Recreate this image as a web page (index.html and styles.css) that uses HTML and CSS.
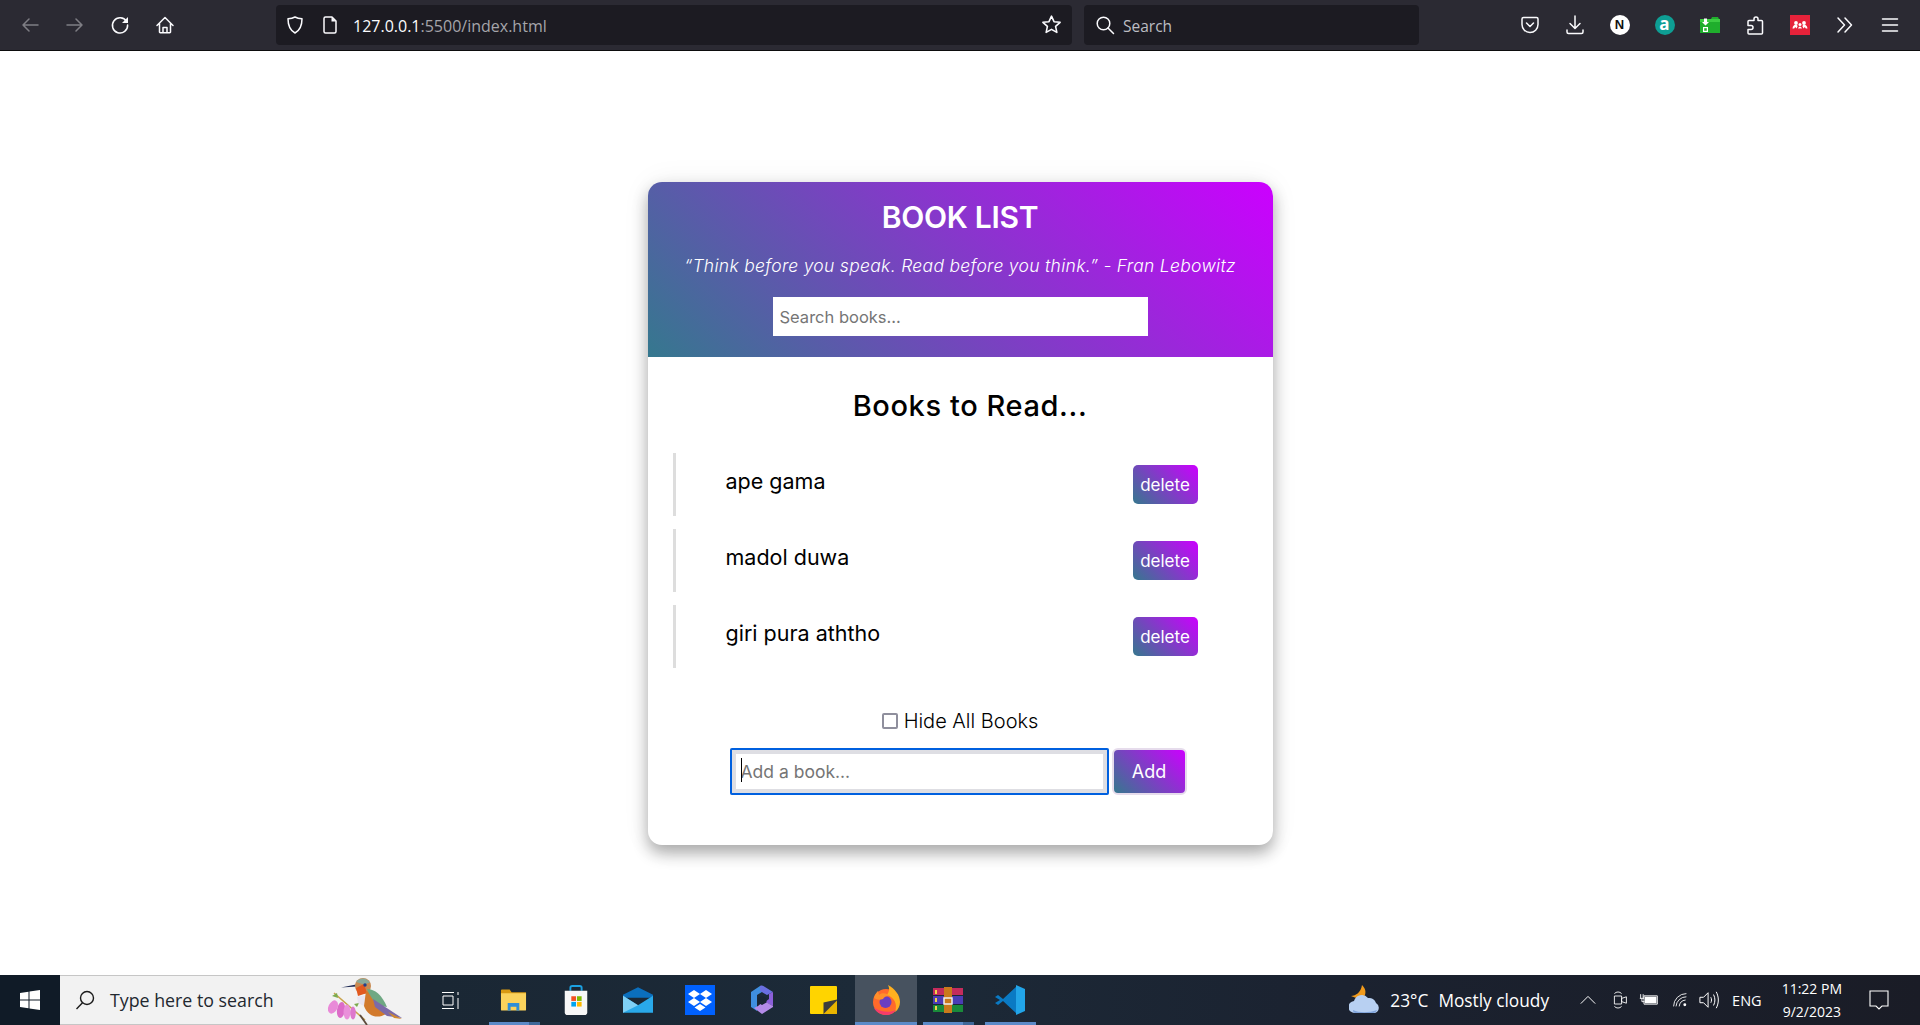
FILE: index.html
```html
<!DOCTYPE html>
<html lang="en">
<head>
<meta charset="utf-8">
<title>Book List</title>
<link rel="stylesheet" href="styles.css">
</head>
<body>
<header class="toolbar">
  <nav class="nav-group">
    <span class="slot dim"><svg viewBox="0 0 20 20" class="ico"><path d="M18 10H3M9 4l-6 6 6 6"/></svg></span>
    <span class="slot dim"><svg viewBox="0 0 20 20" class="ico"><path d="M2 10h15M11 4l6 6-6 6"/></svg></span>
    <span class="slot"><svg viewBox="0 0 20 20" class="ico"><path d="M16.500 6.500A7.600 7.600 0 1 0 17.600 10"/><path class="fill" d="M18 2v6h-6z"/></svg></span>
    <span class="slot"><svg viewBox="0 0 20 20" class="ico"><path d="M2 10.500 10 2.500l8 8M4.500 8.500V17a.8.8 0 0 0 .8.8h9.400a.8.8 0 0 0 .8-.8V8.500M8 17.800V12.500h4v5.300"/></svg></span>
  </nav>
  <div class="urlbar">
    <svg viewBox="0 0 20 20" class="ico shield"><path d="M10 2c2 1.200 4 1.700 7 1.800 0 6.700-1.800 11.500-7 14.200C4.800 15.300 3 10.500 3 3.800 6 3.700 8 3.200 10 2z"/></svg>
    <svg viewBox="0 0 20 20" class="ico doc"><path d="M4 3.500A1.500 1.500 0 0 1 5.500 2H12l4 4v10.500a1.500 1.500 0 0 1-1.500 1.500h-9A1.500 1.500 0 0 1 4 16.500z"/><path class="fill" d="M11.500 2 16 6.500h-4.500z"/></svg>
    <span class="url"><b>127.0.0.1</b>:5500/index.html</span>
    <svg viewBox="0 0 20 20" class="ico star"><path d="m10 2 2.400 5.300 5.800.6-4.300 3.900 1.200 5.700L10 14.600l-5.100 2.900 1.200-5.700L1.800 7.900l5.800-.6z"/></svg>
  </div>
  <div class="searchbar">
    <svg viewBox="0 0 20 20" class="ico"><circle cx="8.500" cy="8.500" r="6.300"/><path d="m13 13 5.500 5.500"/></svg>
    <span class="search-word">Search</span>
  </div>
  <div class="tools">
    <span class="slot"><svg viewBox="0 0 20 20" class="ico"><path d="M3.500 2.500h13A1.500 1.500 0 0 1 18 4v5.500a8 8 0 0 1-16 0V4a1.500 1.500 0 0 1 1.500-1.500z"/><path d="m6.500 8 3.500 3.500L13.500 8"/></svg></span>
    <span class="slot"><svg viewBox="0 0 20 20" class="ico"><path d="M10 1v12M5 8.500l5 5 5-5M2 15v2a1.500 1.500 0 0 0 1.500 1.500h13A1.500 1.500 0 0 0 18 17v-2"/></svg></span>
    <span class="slot"><span class="ext-n">N</span></span>
    <span class="slot"><span class="ext-a">a</span></span>
    <span class="slot"><svg viewBox="0 0 20 20" class="flat"><path fill="#1fae2c" d="M0 4h11l1-2h6l1 2h1v14H0z"/><path fill="#3ccb42" d="M0 4h20v3H0z"/><path fill="#fff" d="M4 3.500h3V7h2l-3.500 3.500L2 7h2zM3 12h5v5H3z"/><path fill="#2cb535" d="M4.200 13.200h2.600v2.600H4.200z"/></svg></span>
    <span class="slot"><svg viewBox="0 0 20 20" class="ico"><path d="M11 2a2 2 0 0 1 2 2v1.500h3.500a1 1 0 0 1 1 1V18a1 1 0 0 1-1 1H4a1 1 0 0 1-1-1v-3.500h3a2 2 0 0 0 0-4H3V6.500a1 1 0 0 1 1-1h5V4a2 2 0 0 1 2-2z"/></svg></span>
    <span class="slot"><svg viewBox="0 0 20 20" class="flat"><path fill="#e6223a" d="M0 0h20v20H0z"/><circle cx="6" cy="8" r="1.900" fill="#fff"/><circle cx="14" cy="8" r="1.900" fill="#fff"/><circle cx="10" cy="9.500" r="1.500" fill="#fff"/><path fill="#fff" d="M2.500 13.500c.3-2.500 1.500-3.700 3-3.700 1 0 1.700.5 2.200 1.300l-1.200 2.400-1.300-1.500-1 1.500zM17.500 13.500c-.3-2.500-1.500-3.700-3-3.700-1 0-1.700.5-2.200 1.300l1.200 2.400 1.300-1.500 1 1.500zM8 14c.2-1.600 1-2.600 2-2.600s1.800 1 2 2.600l-1.100-.9-.9.9-.9-.9z"/></svg></span>
    <span class="slot"><svg viewBox="0 0 20 20" class="ico"><path d="m3 3 6.500 7L3 17M10 3l6.500 7-6.500 7"/></svg></span>
    <span class="slot"><svg viewBox="0 0 20 20" class="ico"><path d="M2.500 4h15M2.500 10h15M2.500 16h15"/></svg></span>
  </div>
</header>

<main class="page">
  <section class="card">
    <div class="card-head">
      <h1 class="title">BOOK LIST</h1>
      <p class="quote">“Think before you speak. Read before you think.” - Fran Lebowitz</p>
      <input class="search-input" type="text" placeholder="Search books...">
    </div>
    <div class="card-body">
      <h2 class="subtitle">Books to Read...</h2>
      <ul class="book-list">
        <li class="book"><span class="book-name">ape gama</span><button class="delete" type="button">delete</button></li>
        <li class="book"><span class="book-name">madol duwa</span><button class="delete" type="button">delete</button></li>
        <li class="book"><span class="book-name">giri pura aththo</span><button class="delete" type="button">delete</button></li>
      </ul>
      <label class="hide-row"><input class="hide-check" type="checkbox"><span>Hide All Books</span></label>
      <form class="add-row">
        <span class="add-wrap"><input class="add-input" type="text" placeholder="Add a book..."><i class="caret"></i></span>
        <button class="add-btn" type="button">Add</button>
      </form>
    </div>
  </section>
</main>

<footer class="taskbar">
  <span class="start"><svg viewBox="0 0 20 20" class="flat"><path fill="#fff" d="M0 3l8.500-1.300V9.500H0zM9.500 1.500 20 0v9.500H9.500zM0 10.500h8.500v7.800L0 17zM9.500 10.500H20V20L9.500 18.500z"/></svg></span>
  <div class="task-search">
    <svg viewBox="0 0 20 20" class="mag"><circle cx="12" cy="8" r="6.500"/><path d="M7.500 12.700 1.500 19"/></svg>
    <span class="task-search-text">Type here to search</span>
    <svg viewBox="0 0 90 50" class="bird">
      <path d="M14 18 45 45" stroke="#c9a24a" stroke-width="1.500" fill="none"/>
      <path d="M40 40 47 50" stroke="#5c4a3c" stroke-width="1.800" fill="none"/>
      <ellipse cx="13" cy="32" rx="4.500" ry="7" fill="#e98ad8" transform="rotate(25 13 32)"/>
      <ellipse cx="21" cy="35" rx="4" ry="8" fill="#dc6cc8" transform="rotate(8 21 35)"/>
      <ellipse cx="27" cy="37" rx="3.500" ry="7.500" fill="#ea90da"/>
      <ellipse cx="33" cy="38" rx="2.800" ry="6.500" fill="#de78cc"/>
      <path fill="#7cab4e" d="M12 21l5-3 1 5zM34 29l5-1-2 4z"/>
      <path fill="#1f2b55" d="M21 12.500 36 9.500l1 2z"/>
      <circle cx="43" cy="11" r="8" fill="#c98a52"/>
      <path fill="#8aa998" d="M36 7a8.500 8.500 0 0 1 14 .5l-6 2z"/>
      <path fill="#e2591f" d="M36 13l8-4 3 9-9 3z"/>
      <circle cx="45" cy="10" r="1.700" fill="#24408a"/>
      <path fill="#e8e4f0" d="M37 22l9-2 2 8-4 3-6-3z"/>
      <path fill="#d27a2c" d="M46 16c8 2 14 10 20 23-8 5-18 3-22-8z"/>
      <path fill="#6fa883" d="M47 14c8 0 15 6 20 18l-7-1c-5-3-10-9-13-17z"/>
      <path fill="#7d6aa8" d="M53 24l29 19-15-2-12-9z"/>
      <path fill="#d08a2f" d="M68 37l14 7-8-1z"/>
    </svg>
  </div>
  <span class="task-slot task-view"><svg viewBox="0 0 20 20" class="thin"><path d="M1 2.500h12M1 18.500h12M2 6h10v9H2zM17 2v3M17 8v11"/></svg></span>
  <span class="task-slot run split"><svg viewBox="0 0 28 24" class="app app-folder"><path fill="#d99a12" d="M1 2a1 1 0 0 1 1-1h8l2 3h15v5H1z"/><path fill="#fbd35c" d="M1 5h26v17a1 1 0 0 1-1 1H2a1 1 0 0 1-1-1z"/><path fill="#2f8fd8" d="M8 15h12v8h-3v-4h-6v4H8z"/></svg></span>
  <span class="task-slot"><svg viewBox="0 0 28 32" class="app"><path d="M8 6V3a2 2 0 0 1 2-2h8a2 2 0 0 1 2 2v3" fill="none" stroke="#1ba1e2" stroke-width="2"/><path fill="#f7f7f7" d="M2 6h24v23a3 3 0 0 1-3 3H5a3 3 0 0 1-3-3z"/><path fill="#f25022" d="M9 12h5v5H9z"/><path fill="#7fba00" d="M15 12h5v5h-5z"/><path fill="#00a4ef" d="M9 18h5v5H9z"/><path fill="#ffb900" d="M15 18h5v5h-5z"/></svg></span>
  <span class="task-slot"><svg viewBox="0 0 28 24" class="app"><path fill="#0b6fbd" d="M0 7 14 0l14 7v3H0z"/><path fill="#29a9ea" d="M0 8l14 9 14-9v16H0z"/><path fill="#7fd0f5" d="M0 8l14 9L0 24z"/></svg></span>
  <span class="task-slot"><svg viewBox="0 0 30 30" class="app"><path fill="#0061ff" d="M0 0h30v30H0z"/><path fill="#fff" d="m9 5 6 4-6 4-6-4zM21 5l6 4-6 4-6-4zM9 13l6 4-6 4-6-4zM21 13l6 4-6 4-6-4zM15 19l5.500 3.500L15 26l-5.500-3.500z"/></svg></span>
  <span class="task-slot"><svg viewBox="0 0 26 30" class="app"><path fill="#3f8fe0" d="M11 1 2 7v15l6 4V10l8-5z"/><path fill="#6a6fe0" d="M11 1c2-1 3 0 5 1l8 5-6 3-7-4z"/><path fill="#8b5fd9" d="M24 7v14l-8-4 4-3V9z"/><path fill="#b48be8" d="M5 23l8 6 11-7v-1l-9-5-6 5z"/><path fill="#1a2634" d="M13 11l4.500 2.500v4L13 20l-4.500-2.500v-4z"/></svg></span>
  <span class="task-slot"><svg viewBox="0 0 26 27" class="app app-note"><path fill="#ffd400" d="M0 1a1 1 0 0 1 1-1h24a1 1 0 0 1 1 1v25a1 1 0 0 1-1 1H1a1 1 0 0 1-1-1z"/><path fill="#3c3c3c" d="M13 27V16l13-3v4L16 27z"/><path fill="#e8b400" d="M13 27 26 14v12a1 1 0 0 1-1 1z"/></svg></span>
  <span class="task-slot active run"><svg viewBox="0 0 28 30" class="app"><circle cx="14" cy="17" r="13" fill="#ff6a2b"/><path fill="#ffb01f" d="M16 0c7 4 12 10 12 17 0 4-2 8-5 10 3-8-1-15-8-17 2-3 3-6 1-10z"/><path fill="#f53c6b" d="M2 23c2 4 7 7 12 7 4 0 8-2 10-5-6 3-15 2-22-2z"/><circle cx="13.500" cy="17" r="6" fill="#6a3ec0"/><path fill="#ff8f2a" d="M2 13c1-4 3-6 4-7l1 4c2-2 5-2 8-1l2 2c-3 0-5 1-6 3-3 1-6 1-9-1z"/></svg></span>
  <span class="task-slot run split"><svg viewBox="0 0 30 26" class="app"><path fill="#c42c5c" d="M0 1h30v7H0z"/><path fill="#4b3cb5" d="M0 9h30v8H0z"/><path fill="#1a8a3a" d="M0 18h30v7H0z"/><path fill="#c9791c" d="M11 0h8v26h-8z"/><path fill="#f1d44b" d="M2 3h2v4H2zM2 11h2v4H2zM2 19h2v4H2z"/><path fill="none" stroke="#eee" stroke-width="1.500" d="M11 11h8v6h-8z"/></svg></span>
  <span class="task-slot run"><svg viewBox="0 0 30 30" class="app"><path fill="#0a7ac4" d="M22 1 8 14 3 10 0 12l5 3-5 3 3 2 5-4 14 13z"/><path fill="#22a5e8" d="M21 0l9 4v22l-9 4z"/><path fill="#0a7ac4" d="M21 8l-9 7 9 7z"/></svg></span>
  <div class="tray">
    <svg viewBox="0 0 32 30" class="weather"><path fill="#f09a1c" d="M13 0c3 3 5 7 2 12-4 2-9 1-13-1 5 0 10-4 11-11z"/><path fill="#b8d0f2" d="M6 28a6 6 0 0 1-1-12 8 8 0 0 1 14-3 7 7 0 0 1 8 5 5.500 5.500 0 0 1-1 10z"/><path fill="#7fa3da" d="M4 25c6 3 16 3 24 0-1 2-2 3-4 3H6c-1 0-2-1-2-3z"/></svg>
    <span class="temp">23°C</span>
    <span class="cond">Mostly cloudy</span>
    <svg viewBox="0 0 20 20" class="tray-ico chev"><path d="m2 14 8-8 8 8"/></svg>
    <svg viewBox="0 0 20 24" class="tray-ico meet"><path d="M3 7h9v10H3zM12 10l6-2v8l-6-2zM3 4a6 6 0 0 1 9 0M3 20a6 6 0 0 0 9 0"/></svg>
    <svg viewBox="0 0 24 20" class="tray-ico batt"><path d="M6 5h16v10H6z"/><path class="solid" d="M7 6h14v8H7z"/><path d="M2 3v5M5 3v5M1 8h5M3.500 8v4h3"/></svg>
    <svg viewBox="0 0 20 20" class="tray-ico wifi"><path d="M2 18A16 16 0 0 1 18 2M5 18A13 13 0 0 1 18 6M9 18a9 9 0 0 1 8-8"/><circle class="solid" cx="16" cy="16" r="1.800"/></svg>
    <svg viewBox="0 0 24 22" class="tray-ico vol"><path d="M2 8h4l5-5v16l-5-5H2zM14 8c1 2 1 4 0 6M17 5c2 4 2 8 0 12M20 2c3 6 3 12 0 18"/></svg>
    <span class="lang">ENG</span>
    <span class="clock"><span>11:22 PM</span><span>9/2/2023</span></span>
    <svg viewBox="0 0 20 20" class="tray-ico note"><path d="M1 1h18v15h-6l-3 3-3-3H1z"/></svg>
  </div>
</footer>
</body>
</html>
```

FILE: styles.css
```css
* { box-sizing: border-box; }
html, body { margin: 0; height: 100%; }
body {
  display: flex;
  flex-direction: column;
  height: 1025px;
  overflow: hidden;
  background: #fff;
  font-family: "Open Sans", "Noto Sans", sans-serif;
}

/* browser toolbar */
.toolbar {
  height: 51px;
  flex: none;
  display: flex;
  align-items: center;
  padding: 0 8px 1px 7px;
  background: #2b2a33;
  border-bottom: 1px solid #0c0c0d;
  color: #fbfbfe;
}
.nav-group, .tools { display: flex; }
.slot { width: 45px; height: 40px; display: flex; align-items: center; justify-content: center; flex: none; }
.slot.dim { opacity: .4; }
.ico { width: 20px; height: 20px; fill: none; stroke: #fbfbfe; stroke-width: 1.500; stroke-linejoin: round; stroke-linecap: round; flex: none; }
.ico .fill { fill: #fbfbfe; stroke: none; }
.flat { width: 20px; height: 20px; flex: none; display: block; }
.urlbar {
  margin-left: 89px;
  width: 796px;
  height: 40px;
  background: #1c1b22;
  border-radius: 4px;
  display: flex;
  align-items: center;
  padding: 0 10px 0 9px;
  flex: none;
}
.doc { margin-left: 15px; }
.url { margin-left: 13px; padding-top: 2px; font-size: 16px; color: #a5a5aa; white-space: nowrap; }
.url b { font-weight: 400; color: #fbfbfe; }
.star { margin-left: auto; width: 21px; height: 21px; }
.searchbar {
  margin-left: 12px;
  width: 335px;
  height: 40px;
  background: #1c1b22;
  border-radius: 4px;
  display: flex;
  align-items: center;
  padding-left: 11px;
  gap: 8px;
  font-size: 15.500px;
  color: #bdbdc2;
  flex: none;
}
.search-word { padding-top: 2px; }
.tools { margin-left: auto; }
.ext-n {
  width: 20px; height: 20px; border-radius: 50%;
  background: #fff; color: #111;
  font: 700 13px/20px "Liberation Sans", sans-serif;
  text-align: center;
}
.ext-a {
  width: 20px; height: 20px; border-radius: 50%;
  background: #0e9e94; color: #fff;
  font: 700 17px/18px "Open Sans", sans-serif;
  text-align: center;
}

/* page */
.page {
  flex: 1;
  display: flex;
  justify-content: center;
  align-items: flex-start;
  padding-top: 131px;
  min-height: 0;
}
.card {
  width: 625px;
  height: 663px;
  border-radius: 14px;
  background: #fff;
  box-shadow: 0 8px 16px rgba(0, 0, 0, .32), 0 0 30px rgba(0, 0, 0, .06);
  font-family: Inter, "Noto Sans", sans-serif;
  color: #000;
}
.card-head {
  height: 175px;
  border-radius: 14px 14px 0 0;
  background: linear-gradient(45deg, #35788e, #cc00ff);
  color: #fff;
  text-align: center;
  padding-top: 17px;
}
.title { margin: 0; font-size: 30px; line-height: 36px; font-weight: 600; letter-spacing: -.3px; }
.quote { margin: 19px 0 0; font-size: 17.500px; line-height: 24px; font-style: italic; font-weight: 300; letter-spacing: .3px; }
.search-input {
  display: block;
  width: 375px;
  height: 39px;
  margin: 19px auto 0;
  padding: 0 7px;
  border: 0;
  background: #fff;
  font: 400 16.500px Inter, sans-serif;
}
.card-body { padding: 0; }
input::placeholder { color: #757575; opacity: 1; }
.subtitle {
  margin: 0;
  padding: 31px 0 0 20px;
  text-align: center;
  font-size: 29px;
  line-height: 36px;
  font-weight: 500;
  letter-spacing: .6px;
}
.book-list {
  list-style: none;
  margin: 29px 0 0 25px;
  padding: 0;
  display: flex;
  flex-direction: column;
  gap: 13px;
}
.book {
  height: 63px;
  width: 525px;
  border-left: 3px solid #ddd;
  padding: 10px 0 0 50px;
  display: flex;
  justify-content: space-between;
  align-items: flex-start;
}
.book-name { font-size: 21.500px; line-height: 36px; }
.delete {
  width: 65px;
  height: 39px;
  margin-top: 2px;
  border: 0;
  border-radius: 5px;
  padding: 0;
  background: linear-gradient(45deg, #35788e, #cc00ff);
  color: #fff;
  font: 400 17px Inter, sans-serif;
}
.hide-row {
  display: flex;
  align-items: center;
  justify-content: center;
  gap: 6px;
  margin-top: 39px;
  height: 28px;
  font-size: 20px;
  font-weight: 300;
}
.hide-check {
  width: 16px;
  height: 16px;
  margin: 0;
  appearance: none;
  background: #fff;
  border: 2px solid #8f8f9d;
  border-radius: 2px;
}
.add-row {
  display: flex;
  justify-content: center;
  gap: 3px;
  margin: 13px 0 0 -4px;
}
.add-wrap { position: relative; display: block; }
.add-input {
  display: block;
  width: 379px;
  height: 47px;
  padding: 0 9px;
  border: 2px solid #ddd;
  outline: 2px solid #0060df;
  outline-offset: -2px;
  box-shadow: inset 0 0 0 4px #dedee3;
  font: 400 17.500px Inter, sans-serif;
  border-radius: 2px;
  background: #fff;
}
.caret { position: absolute; left: 11px; top: 10px; width: 1px; height: 24px; background: #000; }
.add-btn {
  width: 75px;
  height: 47px;
  padding: 0;
  border: 2px solid #e6dcec;
  border-radius: 6px;
  background: linear-gradient(45deg, #35788e, #cc00ff);
  color: #fff;
  font: 400 18px Inter, sans-serif;
}

/* taskbar */
.taskbar {
  height: 50px;
  flex: none;
  display: flex;
  align-items: stretch;
  background: linear-gradient(90deg, #182430, #1c2a38 45%, #1b2230 70%, #1a1c26);
  font-family: "Open Sans", "Noto Sans", sans-serif;
  color: #fff;
}
.start { width: 60px; background: #101b27; display: flex; align-items: center; justify-content: center; flex: none; }
.task-search {
  width: 360px;
  flex: none;
  display: flex;
  align-items: center;
  background: #f2f2f2;
  border-top: 1px solid #c6c6c6;
  border-bottom: 1px solid #c6c6c6;
  color: #22282f;
  padding-left: 15px;
}
.mag { width: 20px; height: 20px; fill: none; stroke: #1b1b1b; stroke-width: 1.400; flex: none; }
.task-search-text { margin-left: 15px; font-size: 17.800px; white-space: nowrap; }
.bird { width: 90px; height: 50px; margin-left: auto; margin-right: 10px; flex: none; }
.task-slot { width: 62px; flex: none; display: flex; align-items: center; justify-content: center; position: relative; }
.task-view { width: 62.500px; }
.thin { width: 20px; height: 20px; fill: none; stroke: #fff; stroke-width: 1; }
.app { width: 30px; height: 30px; display: block; }
.app-folder { width: 27px; }
.app-note { width: 27px; }
.active { background: #47525f; }
.run::after {
  content: "";
  position: absolute;
  left: 6px; right: 5px; bottom: 0;
  height: 3px;
  background: #5b8ac8;
}
.active.run::after { left: 0; right: 0; }
.split::before {
  content: "";
  position: absolute;
  right: 5px; bottom: 0;
  width: 11px;
  height: 3px;
  background: #3e6798;
  z-index: 1;
}
.tray { margin-left: auto; display: flex; align-items: center; flex: none; padding-right: 31px; font-size: 17.300px; }
.weather { width: 32px; height: 30px; flex: none; }
.temp { margin-left: 9px; }
.cond { margin-left: 10px; }
.tray-ico { fill: none; stroke: #fff; stroke-width: 1.100; flex: none; }
.tray-ico .solid { fill: #fff; stroke: none; }
.chev { width: 18px; height: 18px; margin-left: 30px; }
.meet { width: 16px; height: 20px; margin-left: 15px; }
.batt { width: 20px; height: 18px; margin-left: 11px; }
.wifi { width: 16px; height: 16px; margin-left: 13px; }
.vol { width: 22px; height: 20px; margin-left: 10px; }
.lang { margin-left: 12px; font-size: 14.500px; }
.clock { margin-left: 20px; display: flex; flex-direction: column; align-items: center; font-size: 14px; line-height: 23px; }
.note { width: 20px; height: 20px; margin-left: 27px; }
```
